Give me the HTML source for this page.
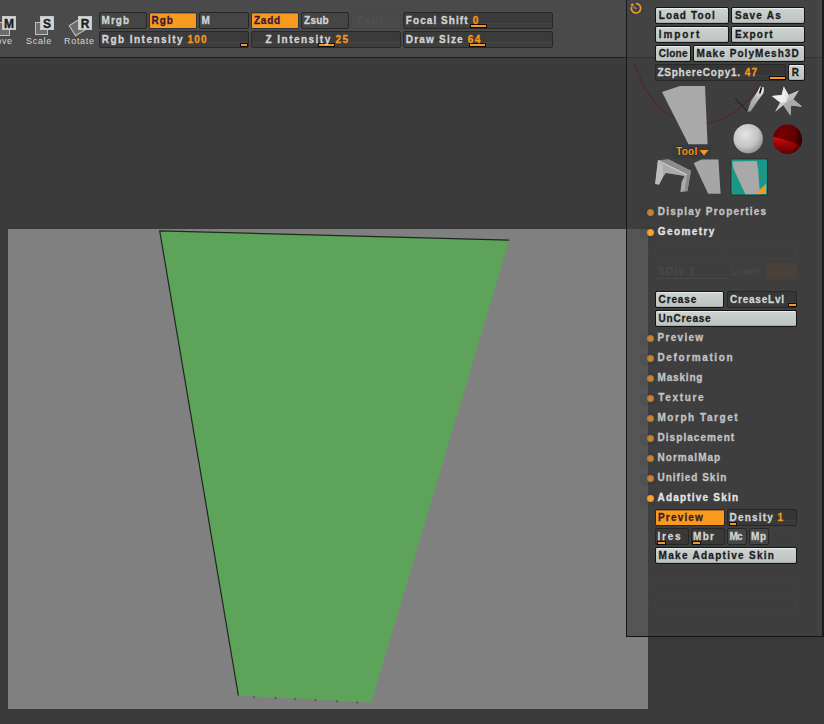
<!DOCTYPE html>
<html><head><meta charset="utf-8">
<style>
*{margin:0;padding:0;box-sizing:border-box}
html,body{width:824px;height:724px;overflow:hidden;background:#3a3a3a;position:relative;font-family:"Liberation Sans",sans-serif}
.a{position:absolute}
#tb{left:0;top:0;width:824px;height:57px;background:#4a4a4a}
#tbl{left:0;top:57px;width:824px;height:1px;background:#1e1e1e}
#tbl2{left:0;top:58px;width:824px;height:6px;background:#3d3d3d}
.btn{position:absolute;background:#454545;border:1px solid #262626;border-radius:2px}
.btn.on{background:#f89a1e;border-color:#2c3540;box-shadow:inset 0 1px 0 #b86e1a}
.btn.on2{border-color:#262626}
.btn.dis{background:#4a4a4a;border-color:#464646}
.btn.b2{background:#393939}
.btn.b3{background:#464646}
.sl{position:absolute;background:linear-gradient(#3b3b3b 0,#3b3b3b 10px,#444 10px,#444 11px,#3e3e3e 11px);border:1px solid #282828;border-radius:2px}
.sl.dk{background:linear-gradient(#363636 0,#363636 10px,#3f3f3f 10px,#3f3f3f 11px,#393939 11px)}
.us{position:absolute;background:#f7981d;border:1px solid #0e0e0e}
.lg{position:absolute;background:linear-gradient(#cdd3d1,#bcc2c0);border:1px solid #141414;border-radius:2px;box-shadow:inset 0 1px 0 #e8eeec,inset 0 -1px 0 #a6acaa}
.ghost{position:absolute;border:1px solid #414141;border-radius:2px}
.ghost2{position:absolute;border-bottom:1px solid #474747}
.ghostO{position:absolute;background:#4b4038;border-radius:2px}
.lb{font-size:9px;line-height:12px;color:#d6d6d6;white-space:nowrap;letter-spacing:0.7px}
.ic{position:absolute;width:14px;height:14px;background:#d2d6d6;color:#1e1e1e;font-weight:bold;font-size:12px;text-align:center;line-height:16px;-webkit-text-stroke:0.4px #1e1e1e;box-shadow:inset 0 0 0 1px #c4c8c8}
.ib{position:absolute;width:14px;height:14px;background:#6c6c6c;border:1px solid #c0c0c0}
#canvas{left:8px;top:229px;width:640px;height:480px;background:#808080}
#panel{left:626px;top:0;width:198px;height:637px;background:rgba(64,64,64,0.67);border-left:1px solid #161616;border-right:2px solid #1c1c1c;border-bottom:1px solid #141414}
.dot{position:absolute;left:647px;width:7px;height:7px;border-radius:50%;background:radial-gradient(#d08a3c,#b06c2a)}
.halo{position:absolute;left:640px;width:16px;height:12px;border-radius:3px;background:rgba(24,34,56,0.07)}
.dot.o{background:radial-gradient(#ffa830,#f0901a)}
svg text{font-family:"Liberation Sans";font-weight:bold;font-size:10px}
</style></head><body>
<div id="tb" class="a"></div>
<div id="tbl" class="a"></div>
<div id="tbl2" class="a"></div>

<!-- transform icons -->
<div class="ib" style="left:-4px;top:22px"></div>
<div class="ic" style="left:2px;top:16px">M</div>
<div class="a lb" style="left:-12px;top:35px">Move</div>
<div class="ib" style="left:35px;top:22px;width:13px;height:13px"></div>
<div class="ic" style="left:40px;top:16px">S</div>
<div class="a lb" style="left:26px;top:35px">Scale</div>
<div class="ib" style="left:71px;top:21px;width:13px;height:13px;transform:rotate(-32deg)"></div>
<div class="ic" style="left:78px;top:16px">R</div>
<div class="a lb" style="left:64px;top:35px">Rotate</div>

<!-- canvas -->
<div id="canvas" class="a"></div>
<svg class="a" style="left:0;top:0" width="824" height="724">
<polygon points="159.7,230.9 509.2,240.2 371.3,702.5 238.4,695.7" fill="#5ea35a"/>
<polyline points="238.4,695.7 159.7,230.9 509.2,240.2" fill="none" stroke="#1c2a1c" stroke-width="1.2"/>
<path d="M252.8,697.1 H255.2 M254.0,695.9 V698.3" stroke="#2a302a" stroke-width="0.8" opacity="0.6"/><path d="M274.4,698.2 H276.8 M275.6,697.0 V699.4" stroke="#2a302a" stroke-width="0.8" opacity="0.6"/><path d="M293.8,699.2 H296.2 M295.0,698.0 V700.4" stroke="#2a302a" stroke-width="0.8" opacity="0.6"/><path d="M314.2,700.2 H316.6 M315.4,699.0 V701.4" stroke="#2a302a" stroke-width="0.8" opacity="0.6"/><path d="M335.6,701.3 H338.0 M336.8,700.1 V702.5" stroke="#2a302a" stroke-width="0.8" opacity="0.6"/><path d="M356.0,702.4 H358.4 M357.2,701.2 V703.6" stroke="#2a302a" stroke-width="0.8" opacity="0.6"/>
</svg>

<!-- right panel -->
<div id="panel" class="a"></div>
<div class="a" style="left:817px;top:0;width:5px;height:636px;background:rgba(255,255,255,0.025)"></div>
<svg class="a" style="left:624px;top:0px" width="24" height="20" viewBox="624 0 24 20">
<circle cx="636" cy="8.3" r="7.5" fill="#36414f" opacity="0.55"/>
<path d="M635.8,3.6 A4.7,4.7 0 1 1 631.6,6.7" fill="none" stroke="#f7981d" stroke-width="1.7"/>
<circle cx="632.3" cy="5.0" r="1.4" fill="#f7981d"/>
<path d="M633.6,6.6 L636.2,9" stroke="#e08a20" stroke-width="1.2"/>
</svg>

<svg class="a" style="left:626px;top:60px" width="198" height="140" viewBox="626 60 198 140">
<path d="M635.1,63.9 L636.5,68.7 L638.2,73.4 L640.0,78.0 L642.0,82.4 L644.1,86.6 L646.4,90.6 L648.9,94.5 L651.5,98.1 L654.3,101.6 L657.2,104.8 L660.3,107.8 L663.4,110.5 L666.7,113.1 L670.1,115.3 L673.6,117.3 L677.1,119.1 L680.8,120.5 L684.5,121.7 L688.2,122.7 L692.0,123.3 L695.9,123.7 L699.8,123.8 L703.6,123.6 L707.5,123.2 L711.4,122.4 L715.3,121.4 L719.1,120.1 L722.9,118.6 L726.7,116.8 L730.4,114.7 L734.0,112.3 L737.5,109.8 L741.0,106.9 L744.4,103.9 L747.7,100.6 L750.8,97.1 L753.8,93.4 L756.7,89.5 L759.5,85.4" fill="none" stroke="#502a2a" stroke-width="1.35"/>
<polygon points="662,92 680,86 705,86 707.6,144.6 688.6,144.6" fill="#a9a9a9"/>
<rect x="672" y="144.5" width="39.5" height="14" fill="#393a3d"/>
<polygon points="699.5,150 708.5,150 704,155.5" fill="#f7981d"/>
<!-- brush -->
<defs><linearGradient id="bg" x1="0" y1="1" x2="0.3" y2="0"><stop offset="0" stop-color="#9a9a9a"/><stop offset="0.6" stop-color="#b4b4b4"/><stop offset="1" stop-color="#e8e8e8"/></linearGradient></defs>
<path d="M735,98 L746.5,110.6" stroke="#2c2c2c" stroke-width="1.6"/>
<path d="M747.5,111.5 L751,101 L757.5,91.5 L760,86.5 L764,87.5 L763.5,93 L757,102 L750.5,111.5 Z" fill="url(#bg)"/>
<path d="M761.6,87.3 L759.6,93.4" stroke="#0a0a0a" stroke-width="1.6"/>
<!-- star -->
<polygon points="783.8,86.5 788.6,95.1 798.8,90.4 793.3,99.3 802.2,106.7 791.2,105.6 790.4,115.6 783.3,105.1 775.2,111.7 780.2,102.5 771.8,95.9 781.7,95.1" fill="#c8c8c8"/>
<polygon points="786.5,102.0 783.8,86.5 781.7,95.1" fill="rgb(240,240,240)"/><polygon points="786.5,102.0 783.8,86.5 788.6,95.1" fill="rgb(231,231,231)"/><polygon points="786.5,102.0 798.8,90.4 788.6,95.1" fill="rgb(192,192,192)"/><polygon points="786.5,102.0 798.8,90.4 793.3,99.3" fill="rgb(185,185,185)"/><polygon points="786.5,102.0 802.2,106.7 793.3,99.3" fill="rgb(168,168,168)"/><polygon points="786.5,102.0 802.2,106.7 791.2,105.6" fill="rgb(168,168,168)"/><polygon points="786.5,102.0 790.4,115.6 791.2,105.6" fill="rgb(168,168,168)"/><polygon points="786.5,102.0 790.4,115.6 783.3,105.1" fill="rgb(168,168,168)"/><polygon points="786.5,102.0 775.2,111.7 783.3,105.1" fill="rgb(188,188,188)"/><polygon points="786.5,102.0 775.2,111.7 780.2,102.5" fill="rgb(201,201,201)"/><polygon points="786.5,102.0 771.8,95.9 780.2,102.5" fill="rgb(240,240,240)"/><polygon points="786.5,102.0 771.8,95.9 781.7,95.1" fill="rgb(240,240,240)"/>
<defs>
<radialGradient id="ws" cx="0.4" cy="0.36" r="0.72"><stop offset="0" stop-color="#e4e4e4"/><stop offset="0.6" stop-color="#c4c4c4"/><stop offset="1" stop-color="#868686"/></radialGradient>
<radialGradient id="rs" cx="0.35" cy="0.3" r="0.8"><stop offset="0" stop-color="#7a0000"/><stop offset="0.7" stop-color="#5a0000"/><stop offset="1" stop-color="#360000"/></radialGradient>
<linearGradient id="rb" x1="0" y1="0" x2="0" y2="1"><stop offset="0" stop-color="#e01212"/><stop offset="0.3" stop-color="#a80606"/><stop offset="1" stop-color="#5a0000"/></linearGradient>
<clipPath id="rc"><circle cx="787.5" cy="139.2" r="14.6"/></clipPath>
</defs>
<circle cx="748.2" cy="138.7" r="14.7" fill="url(#ws)"/>
<circle cx="787.5" cy="139.2" r="14.6" fill="url(#rs)"/>
<path clip-path="url(#rc)" d="M772,136.5 Q786,139.5 803,146.5 L803,155 L772,155 Z" fill="url(#rb)"/>
<path clip-path="url(#rc)" d="M796,124 L803,124 L803,156 L790,156 Q800,145 796,124 Z" fill="#000" opacity="0.25"/>
<!-- bent shape -->
<polygon points="655.2,184 657.8,160.2 668.8,159.4 690.9,170.7 690.3,174.2 687.4,191 680.4,192.1 681.6,182.3 684.5,175.9 665.9,173 663,177 659,184.6" fill="#ababab"/>
<polygon points="657.8,160.2 668.8,159.4 690.9,170.7 690.3,174.2 686.8,174.7" fill="#8c8c8c"/>
<polyline points="658.5,160.8 686.8,174.7" fill="none" stroke="#dcdcdc" stroke-width="0.9"/>
<polygon points="690.3,174.2 687.4,191 684.5,191.5 686.8,174.7" fill="#8a8a8a"/>
<polygon points="657.8,162 663,165 663,177 659,184.6 655.2,184" fill="#bdbdbd"/>
<polygon points="693.7,163.1 701.7,159.5 718.4,159.5 720.6,193.7 708.2,193.7" fill="#a6a6a6"/>
<rect x="731" y="159" width="36.5" height="36" fill="#1b9787" stroke="#262626" stroke-width="0.8"/>
<polygon points="732.4,161.5 756.7,161 758.2,170 759.5,189 761.3,194.3 745.4,194.3 733.2,168" fill="#a9a9a9"/>
<polygon points="766,183.8 766,194 755.3,194" fill="#f7981d"/>
</svg>

<div class="btn" style="left:99px;top:12px;width:48px;height:17px;"></div>
<div class="btn on" style="left:149px;top:12px;width:48px;height:17px;"></div>
<div class="btn" style="left:199px;top:12px;width:50px;height:17px;"></div>
<div class="btn on" style="left:251px;top:12px;width:48px;height:17px;"></div>
<div class="btn" style="left:301px;top:12px;width:48px;height:17px;"></div>
<div class="btn dis" style="left:351px;top:12px;width:50px;height:17px;"></div>
<div class="sl" style="left:403px;top:12px;width:150px;height:17px;"></div>
<div class="sl" style="left:99px;top:31px;width:150px;height:17px;"></div>
<div class="sl" style="left:251px;top:31px;width:150px;height:17px;"></div>
<div class="sl" style="left:403px;top:31px;width:150px;height:17px;"></div>
<div class="us" style="left:470px;top:24px;width:17px;height:4px"></div>
<div class="us" style="left:240px;top:43px;width:8px;height:4px"></div>
<div class="us" style="left:318px;top:43px;width:17px;height:4px"></div>
<div class="us" style="left:469px;top:43px;width:17px;height:4px"></div>
<div class="lg" style="left:655px;top:7px;width:74px;height:17px;"></div>
<div class="lg" style="left:731px;top:7px;width:74px;height:17px;"></div>
<div class="lg" style="left:655px;top:26px;width:74px;height:17px;"></div>
<div class="lg" style="left:731px;top:26px;width:74px;height:17px;"></div>
<div class="lg" style="left:655px;top:45px;width:36px;height:17px;"></div>
<div class="lg" style="left:693px;top:45px;width:112px;height:17px;"></div>
<div class="sl dk" style="left:655px;top:64px;width:131px;height:17px;"></div>
<div class="lg" style="left:788px;top:64px;width:17px;height:17px;"></div>
<div class="us" style="left:769px;top:76px;width:17px;height:4px"></div>
<div class="ghost" style="left:655px;top:245px;width:69px;height:14px;"></div>
<div class="ghost" style="left:727px;top:245px;width:70px;height:14px;"></div>
<div class="ghost2" style="left:655px;top:263px;width:73px;height:16px;"></div>
<div class="ghostO" style="left:765px;top:263px;width:32px;height:16px;"></div>
<div class="lg" style="left:655px;top:291px;width:69px;height:17px;"></div>
<div class="sl dk" style="left:727px;top:291px;width:70px;height:17px;"></div>
<div class="us" style="left:788px;top:303px;width:9px;height:4px"></div>
<div class="lg" style="left:655px;top:310px;width:142px;height:17px;"></div>
<div class="btn on on2" style="left:655px;top:509px;width:70px;height:17px;"></div>
<div class="sl dk" style="left:727px;top:509px;width:70px;height:17px;"></div>
<div class="us" style="left:729px;top:522px;width:8px;height:4px"></div>
<div class="btn b2" style="left:655px;top:528px;width:34px;height:17px;"></div>
<div class="btn b2" style="left:691px;top:528px;width:34px;height:17px;"></div>
<div class="btn b3" style="left:727px;top:528px;width:20px;height:17px;"></div>
<div class="btn b3" style="left:749px;top:528px;width:20px;height:17px;"></div>
<div class="us" style="left:657px;top:541px;width:9px;height:4px"></div>
<div class="us" style="left:692px;top:541px;width:9px;height:4px"></div>
<div class="lg" style="left:655px;top:547px;width:142px;height:17px;"></div>
<div class="ghost" style="left:771px;top:528px;width:23px;height:17px;"></div>
<div class="ghost" style="left:655px;top:577px;width:142px;height:16px;"></div>
<div class="ghost" style="left:655px;top:596px;width:142px;height:16px;"></div>
<div class="halo" style="top:207px"></div>
<div class="dot" style="top:209px"></div>
<div class="halo" style="top:227px"></div>
<div class="dot o" style="top:229px"></div>
<div class="halo" style="top:333px"></div>
<div class="dot" style="top:335px"></div>
<div class="halo" style="top:353px"></div>
<div class="dot" style="top:355px"></div>
<div class="halo" style="top:373px"></div>
<div class="dot" style="top:375px"></div>
<div class="halo" style="top:393px"></div>
<div class="dot" style="top:395px"></div>
<div class="halo" style="top:413px"></div>
<div class="dot" style="top:415px"></div>
<div class="halo" style="top:433px"></div>
<div class="dot" style="top:435px"></div>
<div class="halo" style="top:453px"></div>
<div class="dot" style="top:455px"></div>
<div class="halo" style="top:473px"></div>
<div class="dot" style="top:475px"></div>
<div class="halo" style="top:493px"></div>
<div class="dot o" style="top:495px"></div>
<svg class="a" style="left:0;top:0" width="824" height="724">
<text x="101.60" y="24" fill="#d4d4d4" letter-spacing="1.02" stroke="#d4d4d4" stroke-width="0.28">Mrgb</text>
<text x="151.60" y="24" fill="#3a1838" letter-spacing="0.93" stroke="#3a1838" stroke-width="0.28">Rgb</text>
<text x="201.50" y="24" fill="#d4d4d4" letter-spacing="0.00" stroke="#d4d4d4" stroke-width="0.28">M</text>
<text x="253.90" y="24" fill="#3a1838" letter-spacing="0.81" stroke="#3a1838" stroke-width="0.28">Zadd</text>
<text x="304.00" y="24" fill="#d4d4d4" letter-spacing="0.27" stroke="#d4d4d4" stroke-width="0.28">Zsub</text>
<text x="357.00" y="24" fill="#515151" letter-spacing="1.61" stroke="#515151" stroke-width="0.28">Zcut</text>
<text x="405.80" y="24" fill="#d4d4d4" letter-spacing="1.06" stroke="#d4d4d4" stroke-width="0.28">Focal Shift</text>
<text x="472.70" y="24" fill="#f7981d" letter-spacing="0.00" stroke="#f7981d" stroke-width="0.28">0</text>
<text x="101.70" y="43" fill="#d4d4d4" letter-spacing="1.47" stroke="#d4d4d4" stroke-width="0.28">Rgb Intensity</text>
<text x="187.50" y="43" fill="#f7981d" letter-spacing="1.24" stroke="#f7981d" stroke-width="0.28">100</text>
<text x="265.50" y="43" fill="#d4d4d4" letter-spacing="1.47" stroke="#d4d4d4" stroke-width="0.28">Z Intensity</text>
<text x="335.40" y="43" fill="#f7981d" letter-spacing="1.44" stroke="#f7981d" stroke-width="0.28">25</text>
<text x="405.80" y="43" fill="#d4d4d4" letter-spacing="1.20" stroke="#d4d4d4" stroke-width="0.28">Draw Size</text>
<text x="467.70" y="43" fill="#f7981d" letter-spacing="1.44" stroke="#f7981d" stroke-width="0.28">64</text>
<text x="658.70" y="19" fill="#1c1c1c" letter-spacing="1.13" stroke="#1c1c1c" stroke-width="0.28">Load Tool</text>
<text x="734.90" y="19" fill="#1c1c1c" letter-spacing="1.21" stroke="#1c1c1c" stroke-width="0.28">Save As</text>
<text x="658.70" y="38" fill="#1c1c1c" letter-spacing="1.92" stroke="#1c1c1c" stroke-width="0.28">Import</text>
<text x="734.90" y="38" fill="#1c1c1c" letter-spacing="1.21" stroke="#1c1c1c" stroke-width="0.28">Export</text>
<text x="658.70" y="57" fill="#1c1c1c" letter-spacing="0.25" stroke="#1c1c1c" stroke-width="0.28">Clone</text>
<text x="696.60" y="57" fill="#1c1c1c" letter-spacing="1.06" stroke="#1c1c1c" stroke-width="0.28">Make PolyMesh3D</text>
<text x="657.40" y="76" fill="#d4d4d4" letter-spacing="0.78" stroke="#d4d4d4" stroke-width="0.28">ZSphereCopy1.</text>
<text x="744.80" y="76" fill="#f7981d" letter-spacing="1.04" stroke="#f7981d" stroke-width="0.28">47</text>
<text x="791.70" y="76" fill="#1c1c1c" letter-spacing="0.00" stroke="#1c1c1c" stroke-width="0.28">R</text>
<text x="676.00" y="155" fill="#f7981d" letter-spacing="0.31" stroke="#1a1a1a" stroke-width="0.9" paint-order="stroke">Tool</text>
<text x="657.80" y="215" fill="#c4c4c4" letter-spacing="1.21" stroke="#c4c4c4" stroke-width="0.28">Display Properties</text>
<text x="657.80" y="235" fill="#e6e6e6" letter-spacing="1.41" stroke="#e6e6e6" stroke-width="0.28">Geometry</text>
<text x="658.00" y="275" fill="#484848" letter-spacing="1.20" stroke="#484848" stroke-width="0.28">SDiv 1</text>
<text x="731.00" y="275" fill="#464646" letter-spacing="-0.14" stroke="#464646" stroke-width="0.28">Lower</text>
<text x="658.60" y="303" fill="#1c1c1c" letter-spacing="0.86" stroke="#1c1c1c" stroke-width="0.28">Crease</text>
<text x="730.10" y="303" fill="#d4d4d4" letter-spacing="0.76" stroke="#d4d4d4" stroke-width="0.28">CreaseLvl</text>
<text x="658.60" y="322" fill="#1c1c1c" letter-spacing="0.77" stroke="#1c1c1c" stroke-width="0.28">UnCrease</text>
<text x="657.50" y="341" fill="#c4c4c4" letter-spacing="1.30" stroke="#c4c4c4" stroke-width="0.28">Preview</text>
<text x="657.50" y="361" fill="#c4c4c4" letter-spacing="1.62" stroke="#c4c4c4" stroke-width="0.28">Deformation</text>
<text x="657.50" y="381" fill="#c4c4c4" letter-spacing="0.82" stroke="#c4c4c4" stroke-width="0.28">Masking</text>
<text x="658.20" y="401" fill="#c4c4c4" letter-spacing="1.68" stroke="#c4c4c4" stroke-width="0.28">Texture</text>
<text x="657.50" y="421" fill="#c4c4c4" letter-spacing="1.54" stroke="#c4c4c4" stroke-width="0.28">Morph Target</text>
<text x="657.50" y="441" fill="#c4c4c4" letter-spacing="1.06" stroke="#c4c4c4" stroke-width="0.28">Displacement</text>
<text x="657.50" y="461" fill="#c4c4c4" letter-spacing="1.03" stroke="#c4c4c4" stroke-width="0.28">NormalMap</text>
<text x="657.50" y="481" fill="#c4c4c4" letter-spacing="1.00" stroke="#c4c4c4" stroke-width="0.28">Unified Skin</text>
<text x="657.50" y="501" fill="#e6e6e6" letter-spacing="1.20" stroke="#e6e6e6" stroke-width="0.28">Adaptive Skin</text>
<text x="658.00" y="521" fill="#3a1838" letter-spacing="1.18" stroke="#3a1838" stroke-width="0.28">Preview</text>
<text x="729.50" y="521" fill="#d4d4d4" letter-spacing="1.19" stroke="#d4d4d4" stroke-width="0.28">Density</text>
<text x="777.60" y="521" fill="#f7981d" letter-spacing="0.00" stroke="#f7981d" stroke-width="0.28">1</text>
<text x="657.40" y="540" fill="#d4d4d4" letter-spacing="1.79" stroke="#d4d4d4" stroke-width="0.28">Ires</text>
<text x="693.10" y="540" fill="#d4d4d4" letter-spacing="1.28" stroke="#d4d4d4" stroke-width="0.28">Mbr</text>
<text x="729.50" y="540" fill="#d4d4d4" letter-spacing="-0.73" stroke="#d4d4d4" stroke-width="0.28">Mc</text>
<text x="751.10" y="540" fill="#d4d4d4" letter-spacing="0.67" stroke="#d4d4d4" stroke-width="0.28">Mp</text>
<text x="658.60" y="559" fill="#1c1c1c" letter-spacing="1.28" stroke="#1c1c1c" stroke-width="0.28">Make Adaptive Skin</text>
</svg>
</body></html>
